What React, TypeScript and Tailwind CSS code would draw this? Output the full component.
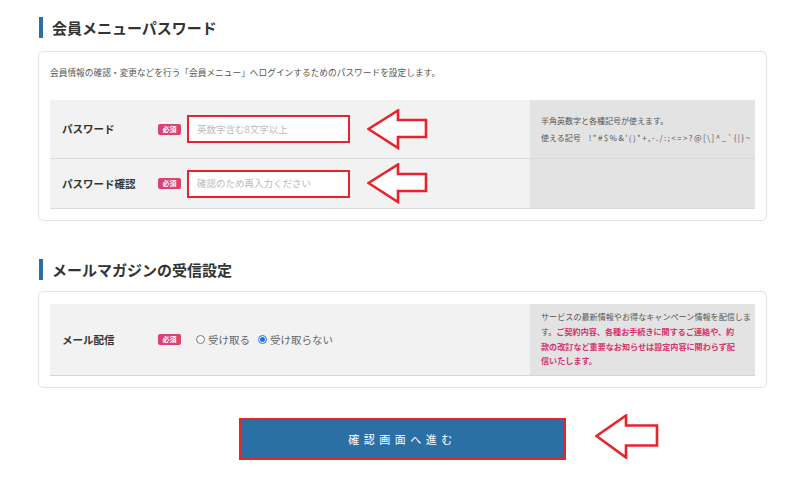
import React from 'react';

const font = { fontFamily: '"Noto Sans CJK JP", "Noto Sans", sans-serif' };

const Arrow: React.FC<{ big?: boolean }> = ({ big }) =>
  big ? (
    <svg width="64" height="45" viewBox="0 0 64 45" className="shrink-0">
      <polygon points="1.5,22 31,1.5 31,11.5 62,11.5 62,31.5 31,31.5 31,43.5" fill="white" stroke="#e8232b" strokeWidth="2.6" strokeLinejoin="miter" />
    </svg>
  ) : (
    <svg width="61" height="41" viewBox="0 0 61 41" className="shrink-0">
      <polygon points="1.5,20 31,1.5 31,11 59,11 59,28 31,28 31,39" fill="white" stroke="#e8232b" strokeWidth="2.6" strokeLinejoin="miter" />
    </svg>
  );

const Badge = () => (
  <span className="inline-flex h-[11px] w-[23px] shrink-0 items-center justify-center rounded-[2px] bg-[#d9446f] text-[7px] font-bold leading-none text-white">
    必須
  </span>
);

const Heading: React.FC<{ children: React.ReactNode }> = ({ children }) => (
  <div className="flex items-center">
    <span className="ml-[1px] h-[21px] w-[4px] bg-[#2c6fa5]" />
    <h2 className="ml-[9px] text-[15px] font-bold leading-none text-[#333]">{children}</h2>
  </div>
);

const Field: React.FC<{ label: string; placeholder: string }> = ({ label, placeholder }) => (
  <div className="flex flex-1 items-center bg-[#f2f2f2] pl-[12px]">
    <span className="w-[96px] shrink-0 text-[10.5px] font-bold text-[#333]">{label}</span>
    <Badge />
    <div className="ml-[6px] flex h-[28px] w-[163px] items-center border-[2.5px] border-[#e8232b] bg-white pl-[8px] text-[9.5px] text-[#bbb]">
      {placeholder}
    </div>
    <div className="ml-[17px]">
      <Arrow />
    </div>
  </div>
);

const Radio: React.FC<{ checked?: boolean; label: string }> = ({ checked, label }) => (
  <span className="flex items-center gap-[3px]">
    {checked ? (
      <span className="flex h-[9px] w-[9px] items-center justify-center rounded-full border border-[#1a73e8] bg-white">
        <span className="h-[5px] w-[5px] rounded-full bg-[#1a73e8]" />
      </span>
    ) : (
      <span className="h-[9px] w-[9px] rounded-full border border-[#777] bg-white" />
    )}
    <span className="text-[10.5px] text-[#666]">{label}</span>
  </span>
);

export default function App() {
  return (
    <div className="min-h-[484px] w-[800px] bg-white" style={font}>
      <div className="ml-[38px] w-[729px] pt-[17px]">
        <Heading>会員メニューパスワード</Heading>

        <div className="mt-[13px] rounded-[5px] border border-[#e3e3e3] px-[11px] pb-[11px] pt-[15px]">
          <p className="text-[8.7px] leading-[12px] text-[#555]">
            会員情報の確認・変更などを行う「会員メニュー」へログインするためのパスワードを設定します。
          </p>
          <div className="mt-[21px]">
            <div className="flex h-[59px] border-b border-[#dadada]">
              <Field label="パスワード" placeholder="英数字含む8文字以上" />
              <div className="flex w-[225px] flex-col justify-center gap-[6px] bg-[#e3e3e3] pl-[11px] text-[8px] leading-[11px] text-[#555]">
                <span>半角英数字と各種記号が使えます。</span>
                <span className="whitespace-nowrap">
                  使える記号　<span className="tracking-[1.4px]">!&quot;#$%&amp;&apos;()*+,-./:;&lt;=&gt;?@[\]^_`{'{'}|{'}'}~</span>
                </span>
              </div>
            </div>
            <div className="flex h-[50px] border-b border-[#dadada]">
              <Field label="パスワード確認" placeholder="確認のため再入力ください" />
              <div className="w-[225px] bg-[#e3e3e3]" />
            </div>
          </div>
        </div>

        <div className="mt-[38px]">
          <Heading>メールマガジンの受信設定</Heading>
        </div>

        <div className="mt-[11px] rounded-[5px] border border-[#e3e3e3] px-[11px] pb-[11px] pt-[12px]">
          <div className="flex h-[72px] border-b border-[#d5d5d5]">
            <div className="flex flex-1 items-center bg-[#f2f2f2] pl-[12px]">
              <span className="w-[96px] shrink-0 text-[10.5px] font-bold text-[#333]">メール配信</span>
              <Badge />
              <div className="ml-[15px] flex items-center gap-[8px]">
                <Radio label="受け取る" />
                <Radio checked label="受け取らない" />
              </div>
            </div>
            <div className="flex w-[225px] flex-col justify-center whitespace-nowrap bg-[#e3e3e3] pl-[11px] text-[8.1px] leading-[14.6px] text-[#555]">
              <span>サービスの最新情報やお得なキャンペーン情報を配信しま</span>
              <span>
                す。<b className="text-[#d6336c]">ご契約内容、各種お手続きに関するご連絡や、約</b>
              </span>
              <b className="text-[#d6336c]">款の改訂など重要なお知らせは設定内容に関わらず配</b>
              <b className="text-[#d6336c]">信いたします。</b>
            </div>
          </div>
        </div>

        <div className="mt-[30px] flex justify-center">
          <div className="relative">
            <button className="flex h-[42px] w-[327px] items-center justify-center border-[2.5px] border-[#e8232b] bg-[#2b70a5] text-[11px] tracking-[4.5px] text-white">
              確認画面へ進む
            </button>
            <div className="absolute left-full top-[-4px] ml-[29px]">
              <Arrow big />
            </div>
          </div>
        </div>
      </div>
    </div>
  );
}
